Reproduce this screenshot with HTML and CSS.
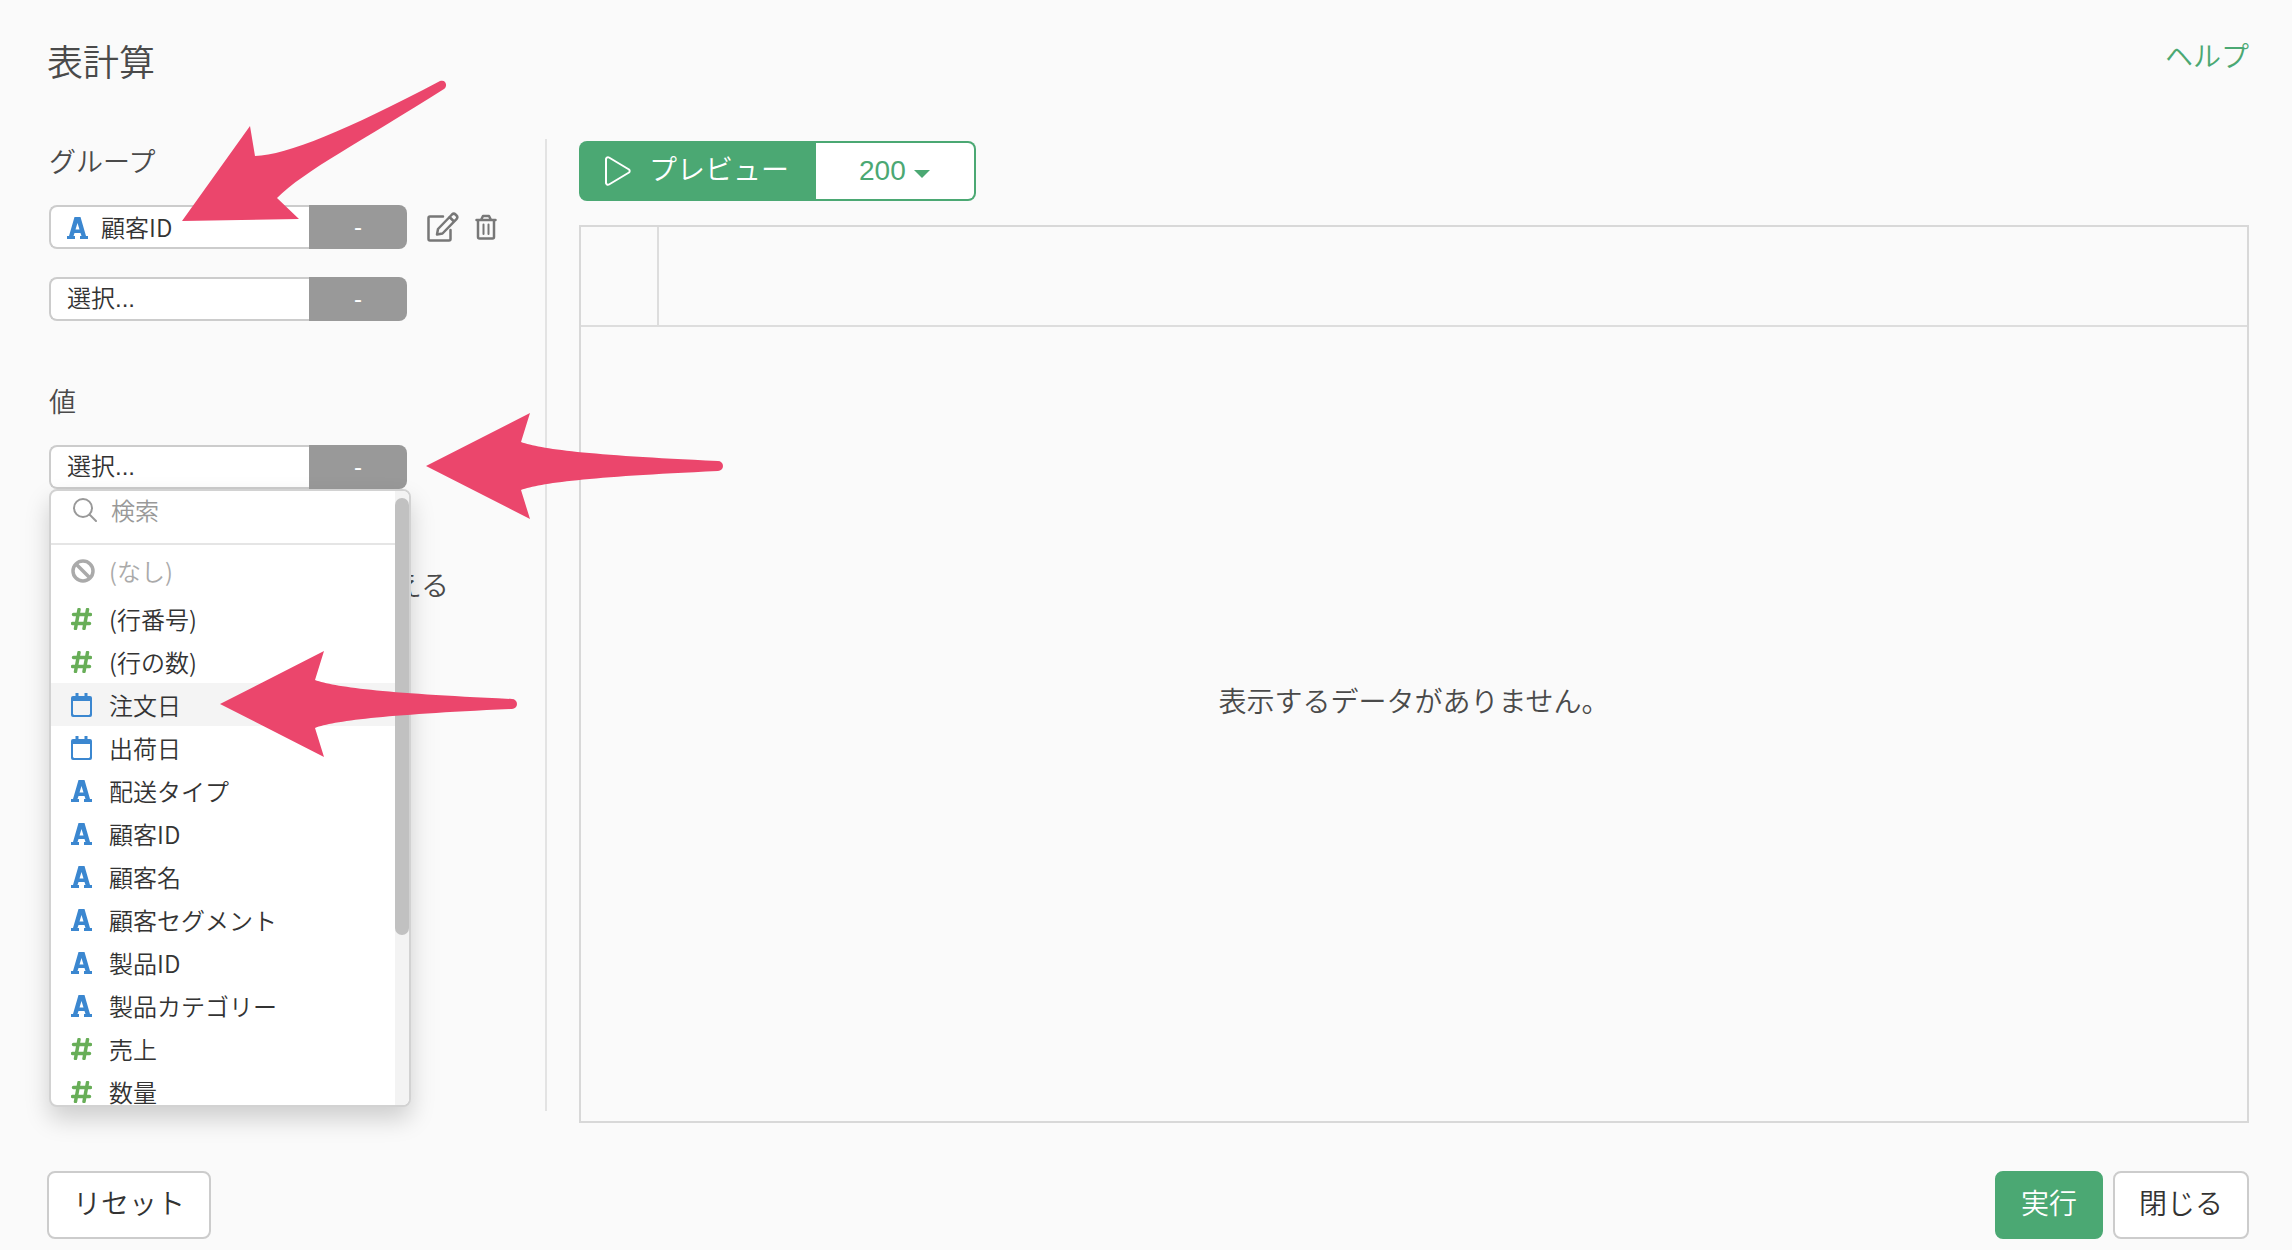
FILE: index.html
```html
<!DOCTYPE html>
<html lang="ja">
<head>
    <meta charset="UTF-8">
    <meta name="viewport" content="width=device-width, initial-scale=1.0">
    <title>表計算</title>
    <link rel="stylesheet" href="styles.css">
</head>
<body>

<!-- Shared icons -->
<svg class="sprite" aria-hidden="true">
    <symbol id="icon-text" viewBox="0 0 21 22">
        <path fill-rule="evenodd" d="M7.500 0h6l5.500 19h2v3h-8v-3h1.500l-1-3h-6l-1 3H8v3H0v-3h2L7.500 0zM10.500 6L8.500 12.500h4z"/>
    </symbol>
    <symbol id="icon-number" viewBox="0 0 21 22">
        <path d="M8 1.500L4.500 20.500M16.500 1.500L13 20.500M2.500 6.500H19.500M1.500 15.500h17" fill="none" stroke="currentColor" stroke-width="3.500" stroke-linecap="round"/>
    </symbol>
    <symbol id="icon-date" viewBox="0 0 21 24">
        <path fill-rule="evenodd" d="M4.500 0h3v3h6V0h3v3H19a2 2 0 0 1 2 2v17a2 2 0 0 1-2 2H2a2 2 0 0 1-2-2V5a2 2 0 0 1 2-2h2.500zM2 8v13l1 1h15l1-1V8z"/>
    </symbol>
</svg>

<header class="header">
    <h1>表計算</h1>
    <a href="#help" class="help-link">ヘルプ</a>
</header>

<main class="content">
    <section class="sidebar">
        <h2>グループ</h2>
        <div class="field">
            <div class="picker">
                <svg class="icon text picker-icon"><use href="#icon-text"/></svg>
                <select class="picker-value with-icon" aria-label="グループ 1">
                    <option>顧客ID</option>
                </select>
                <button type="button" class="picker-func">-</button>
            </div>
            <button type="button" class="icon-button edit" aria-label="編集">
                <svg viewBox="0 0 32 30" width="32" height="30" fill="none" stroke="currentColor" stroke-width="2.500" stroke-linejoin="round" stroke-linecap="round">
                    <path d="M16 4.500H3a1.500 1.500 0 0 0-1.500 1.500v21A1.500 1.500 0 0 0 3 28.500h19a1.500 1.500 0 0 0 1.500-1.500v-9"/>
                    <path d="M11 17L25 2.500a2.500 2.500 0 0 1 3.500 0l1 1a2.500 2.500 0 0 1 0 3.500L15.500 21.500l-5.500 1zM22.500 5l4.500 4.500"/>
                </svg>
            </button>
            <button type="button" class="icon-button" aria-label="削除">
                <svg viewBox="0 0 22 26" width="22" height="26" fill="none" stroke="currentColor" stroke-width="2.500" stroke-linejoin="round" stroke-linecap="round">
                    <path d="M1.500 6h19M6 6l2-4h6l2 4M3 6v17a1.500 1.500 0 0 0 1.500 1.500h13A1.500 1.500 0 0 0 19 23V6"/>
                    <path d="M8.500 10.500v9.500M13.500 10.500v9.500" stroke-width="2"/>
                </svg>
            </button>
        </div>
        <div class="field">
            <div class="picker">
                <select class="picker-value" aria-label="グループ 2">
                    <option>選択...</option>
                </select>
                <button type="button" class="picker-func">-</button>
            </div>
        </div>

        <h2 class="value-title">値</h2>
        <div class="field">
            <div class="picker">
                <button type="button" class="picker-value" aria-haspopup="listbox" aria-expanded="true" aria-controls="columns">選択...</button>
                <button type="button" class="picker-func">-</button>
                <div class="menu">
                    <div class="menu-body">
                        <label class="search">
                            <svg viewBox="0 0 24 24" width="24" height="24" fill="none" stroke="currentColor" stroke-width="2" stroke-linecap="round">
                                <circle cx="10" cy="10" r="9"/>
                                <path d="M16.500 16.500l6.500 6.500"/>
                            </svg>
                            <input type="text" placeholder="検索" aria-label="検索">
                        </label>
                        <ul id="columns" role="listbox">
                            <li role="option" class="none">
                                <svg class="icon" viewBox="0 0 24 24" fill="none" stroke="currentColor" stroke-width="3.500"><circle cx="12" cy="12" r="10"/><path d="M5 5l14 14"/></svg>(なし)
                            </li>
                            <li role="option"><svg class="icon number"><use href="#icon-number"/></svg>(行番号)</li>
                            <li role="option"><svg class="icon number"><use href="#icon-number"/></svg>(行の数)</li>
                            <li role="option" class="active"><svg class="icon date"><use href="#icon-date"/></svg>注文日</li>
                            <li role="option"><svg class="icon date"><use href="#icon-date"/></svg>出荷日</li>
                            <li role="option"><svg class="icon text"><use href="#icon-text"/></svg>配送タイプ</li>
                            <li role="option"><svg class="icon text"><use href="#icon-text"/></svg>顧客ID</li>
                            <li role="option"><svg class="icon text"><use href="#icon-text"/></svg>顧客名</li>
                            <li role="option"><svg class="icon text"><use href="#icon-text"/></svg>顧客セグメント</li>
                            <li role="option"><svg class="icon text"><use href="#icon-text"/></svg>製品ID</li>
                            <li role="option"><svg class="icon text"><use href="#icon-text"/></svg>製品カテゴリー</li>
                            <li role="option"><svg class="icon number"><use href="#icon-number"/></svg>売上</li>
                            <li role="option"><svg class="icon number"><use href="#icon-number"/></svg>数量</li>
                        </ul>
                    </div>
                    <div class="scrollbar"><div class="thumb"></div></div>
                </div>
            </div>
        </div>
        <p class="replace">える</p>
    </section>

    <section class="preview">
        <div class="toolbar">
            <button type="button" class="preview-button">
                <svg viewBox="0 0 26 30" width="26" height="30" fill="none" stroke="currentColor" stroke-width="2" stroke-linejoin="round">
                    <path d="M1 3.500a2 2 0 0 1 3-2l20 12a2 2 0 0 1 0 3L4 28.500a2 2 0 0 1-3-2z"/>
                </svg>
                プレビュー
            </button>
            <div class="limit">
                <select aria-label="行数">
                    <option>200</option>
                </select>
                <svg class="caret" viewBox="0 0 16 8" width="16" height="8"><path d="M0 0h16L8 8z"/></svg>
            </div>
        </div>
        <div class="grid">
            <div class="grid-head"><div class="row-number"></div></div>
            <p class="empty">表示するデータがありません。</p>
        </div>
    </section>
</main>

<footer class="footer">
    <button type="button" class="btn reset">リセット</button>
    <button type="button" class="btn primary">実行</button>
    <button type="button" class="btn">閉じる</button>
</footer>

<!-- Guide arrows -->
<svg class="arrow arrow-group" viewBox="0 0 265 142" width="265" height="142">
    <path d="M0 141L68 46L73 76C105 75 165 50 258 1C264 -1 266 6 262 9C180 61 122 91 95 118L117 139Z"/>
</svg>
<svg class="arrow arrow-value" viewBox="0 0 297 106" width="297" height="106">
    <path d="M0 53L104 0L95 29C115 36 160 42 292 48A5 5 0 0 1 292 58C160 64 115 70 95 77L104 106Z"/>
</svg>
<svg class="arrow arrow-date" viewBox="0 0 297 106" width="297" height="106">
    <path d="M0 53L104 0L95 29C115 36 160 42 292 48A5 5 0 0 1 292 58C160 64 115 70 95 77L104 106Z"/>
</svg>

</body>
</html>
```
FILE: styles.css
```css
* {
    margin: 0;
    padding: 0;
    box-sizing: border-box;
}

body {
    display: flex;
    flex-direction: column;
    min-height: 100vh;
    padding: 0 43px 11px 47px;
    background-color: #fafafa;
    color: #4a4a4a;
    font-family: "Liberation Sans", "Noto Sans CJK JP", sans-serif;
    font-size: 28px;
    font-weight: 350;
    line-height: 40px;
}

button,
input,
select {
    font: inherit;
    color: inherit;
    border: none;
    background: none;
    appearance: none;
}

.sprite {
    display: none;
}

/* Header */
.header {
    display: flex;
    justify-content: space-between;
    padding: 38px 0 21px;
}

h1 {
    height: 80px;
    font-size: 36px;
    font-weight: 350;
    line-height: 52px;
}

.help-link {
    color: #4ba873;
    text-decoration: none;
}

/* Layout */
.content {
    display: flex;
    flex: 1;
    gap: 32px;
}

.sidebar {
    width: 500px;
    margin-bottom: 12px;
    padding: 4px 0 0 2px;
    border-right: 2px solid #e3e3e3;
}

h2 {
    margin-bottom: 22px;
    font-size: 27px;
    font-weight: 350;
}

.value-title {
    margin-top: 62px;
}

/* Column pickers */
.field {
    display: flex;
    align-items: center;
    color: #333;
    font-size: 24px;
}

.field + .field {
    margin-top: 28px;
}

.picker {
    position: relative;
    display: flex;
    width: 358px;
    height: 44px;
}

.picker-value {
    flex: 1;
    padding-left: 16px;
    border: 2px solid #ccc;
    border-right: none;
    border-radius: 8px 0 0 8px;
    background-color: white;
    text-align: left;
}

.picker-value.with-icon {
    padding-left: 50px;
    font-family: "Noto Sans CJK JP", sans-serif;
}

.picker-icon {
    position: absolute;
    left: 18px;
    top: 12px;
}

.picker-func {
    width: 98px;
    border-radius: 0 8px 8px 0;
    background-color: #999;
    color: white;
}

.icon-button {
    display: flex;
    margin-left: 16px;
    color: #777;
}

.icon-button.edit {
    margin-left: 20px;
}

.icon {
    width: 21px;
    height: 22px;
    fill: currentColor;
}

.icon.text {
    color: #3b87d0;
}

.icon.number {
    color: #68ae58;
}

.icon.date {
    height: 24px;
    color: #3b87d0;
}

/* Column menu */
.menu {
    position: absolute;
    top: 100%;
    left: 0;
    z-index: 1;
    display: flex;
    width: 362px;
    height: 618px;
    border: 2px solid #d2d2d2;
    border-radius: 8px;
    background-color: white;
    box-shadow: 0 12px 24px rgba(0, 0, 0, 0.175);
    font-family: "Noto Sans CJK JP", sans-serif;
    overflow: hidden;
}

.menu-body {
    flex: 1;
    min-width: 0;
}

.search {
    display: flex;
    align-items: center;
    gap: 14px;
    height: 54px;
    padding: 0 22px 14px;
    border-bottom: 2px solid #e5e5e5;
    color: #999;
}

.search input {
    flex: 1;
    min-width: 0;
}

.search input::placeholder {
    color: #999;
}

.menu ul {
    padding-top: 4px;
    list-style: none;
}

.menu li {
    display: flex;
    align-items: center;
    gap: 17px;
    height: 43px;
    padding-left: 20px;
}

.menu li.active {
    background-color: #f4f4f4;
}

.menu li.none {
    margin-bottom: 5px;
    color: #aaa;
}

.none .icon {
    width: 24px;
    height: 24px;
    margin-right: -3px;
    fill: none;
}

.scrollbar {
    flex: none;
    width: 14px;
    padding-top: 7px;
    background-color: #f3f3f3;
}

.thumb {
    height: 437px;
    border-radius: 7px;
    background-color: #c1c1c1;
}

.replace {
    width: 400px;
    margin-top: 78px;
    text-align: right;
}

/* Preview */
.preview {
    display: flex;
    flex: 1;
    flex-direction: column;
    gap: 24px;
    padding-top: 2px;
}

.toolbar {
    display: flex;
    height: 60px;
}

.preview-button {
    display: flex;
    align-items: center;
    gap: 18px;
    width: 237px;
    padding-left: 26px;
    border-radius: 8px 0 0 8px;
    background-color: #4ba873;
    color: white;
}

.limit {
    position: relative;
    display: flex;
    width: 160px;
    border: 2px solid #4ba873;
    border-left: none;
    border-radius: 0 8px 8px 0;
    background-color: white;
    color: #4ba873;
}

.limit select {
    flex: 1;
    padding-left: 43px;
}

.caret {
    position: absolute;
    top: 27px;
    right: 44px;
    fill: currentColor;
}

.grid {
    display: flex;
    flex: 1;
    flex-direction: column;
    border: 2px solid #d8d8d8;
}

.grid-head {
    height: 100px;
    border-bottom: 2px solid #ddd;
}

.row-number {
    width: 78px;
    height: 100%;
    border-right: 2px solid #ddd;
}

.empty {
    padding-top: 356px;
    text-align: center;
}

/* Footer */
.footer {
    display: flex;
    gap: 10px;
    margin-top: 48px;
}

.btn {
    height: 68px;
    padding: 0 24px;
    border: 2px solid #ccc;
    border-radius: 8px;
    background-color: white;
    color: #333;
}

.btn.reset {
    margin-right: auto;
}

.btn.primary {
    border-color: #4ba873;
    background-color: #4ba873;
    color: white;
}

/* Guide arrows */
.arrow {
    position: absolute;
    z-index: 2;
    fill: #eb466c;
}

.arrow-group {
    top: 80px;
    left: 182px;
}

.arrow-value {
    top: 413px;
    left: 426px;
}

.arrow-date {
    top: 651px;
    left: 220px;
}
```
